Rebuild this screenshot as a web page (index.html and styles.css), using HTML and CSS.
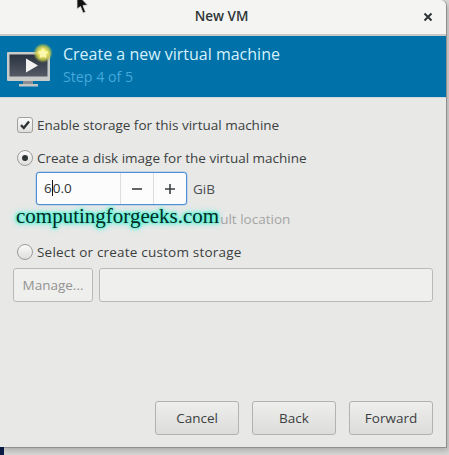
FILE: index.html
```html
<!DOCTYPE html>
<html lang="en">
<head>
<meta charset="utf-8">
<title>New VM</title>
<link rel="stylesheet" href="styles.css">
</head>
<body>
<div class="window">
  <header class="titlebar">
    <span class="title">New VM</span>
    <svg class="close" width="10" height="10" viewBox="0 0 10 10"><path d="M1.5 1.5l7 7M8.5 1.5l-7 7" stroke="#2e3436" stroke-width="2" fill="none"/></svg>
  </header>
  <section class="banner">
    <svg class="vm-icon" width="50" height="44" viewBox="0 0 50 44">
      <defs>
        <radialGradient id="glow"><stop offset="0.35" stop-color="#f6ef6a"/><stop offset="0.7" stop-color="#c9c94a" stop-opacity="0.8"/><stop offset="1" stop-color="#8fb04a" stop-opacity="0"/></radialGradient>
        <linearGradient id="screen" x1="0" y1="0" x2="0" y2="1"><stop offset="0" stop-color="#2b3240"/><stop offset="1" stop-color="#545b66"/></linearGradient>
      </defs>
      <rect x="0" y="9" width="43" height="29" rx="1" fill="#c9cbc9"/>
      <rect x="2.5" y="11.5" width="38" height="22" fill="url(#screen)"/>
      <rect x="16" y="38" width="10" height="3" fill="#8b8f92"/>
      <rect x="12" y="41" width="19" height="2.5" fill="#c4c6c6"/>
      <path d="M19 15.5 L31 22.5 L19 29.5Z" fill="#f2f2f2"/>
      <circle cx="36" cy="10" r="10" fill="url(#glow)"/>
      <path d="M36 4.5l1.7 3.7 4 .4-3 2.7.9 4-3.6-2.1-3.6 2.1.9-4-3-2.7 4-.4z" fill="#fbf7b0"/>
    </svg>
    <div class="banner-text">
      <div class="banner-title">Create a new virtual machine</div>
      <div class="banner-step">Step 4 of 5</div>
    </div>
  </section>
  <main class="content">
    <div class="form">
      <label class="option option-enable">
        <span class="check"><svg width="12" height="12" viewBox="0 0 12 12"><path d="M2 6.2l2.8 2.8L10 2.6" stroke="#2e3436" stroke-width="2.4" fill="none"/></svg></span>
        <span>Enable storage for this virtual machine</span>
      </label>
      <label class="option option-disk">
        <span class="radio radio-on"></span>
        <span>Create a disk image for the virtual machine</span>
      </label>
      <div class="size-row">
        <div class="spin">
          <span class="spin-value">6<i class="caret"></i>0.0</span>
          <span class="spin-btn"><svg width="12" height="12" viewBox="0 0 12 12"><path d="M1 6h10" stroke="#3a3f41" stroke-width="1.6"/></svg></span>
          <span class="spin-btn"><svg width="12" height="12" viewBox="0 0 12 12"><path d="M1 6h10M6 1v10" stroke="#3a3f41" stroke-width="1.6"/></svg></span>
        </div>
        <span class="unit">GiB</span>
      </div>
      <div class="hidden-row">
        <span class="wm">computingforgeeks.com</span><span class="faded">ult location</span>
      </div>
      <label class="option option-custom">
        <span class="radio"></span>
        <span class="custom-label">Select or create custom storage</span>
      </label>
      <div class="manage-row">
        <button class="manage">Manage...</button>
        <div class="path"></div>
      </div>
    </div>
    <footer class="actions">
      <button class="btn">Cancel</button>
      <button class="btn">Back</button>
      <button class="btn">Forward</button>
    </footer>
  </main>
</div>
<svg class="cursor" width="16" height="20" viewBox="0 0 16 20"><path d="M2 -6 L2 9 L5.5 6.5 L8 13 L10.5 12 L8 5.5 L12.5 5 Z" fill="#111" stroke="#ddd" stroke-width="0.8"/></svg>
<div class="corner"></div>
</body>
</html>
```
FILE: styles.css
```css
* { box-sizing: border-box; }
html, body { margin: 0; padding: 0; }
body {
  width: 449px;
  height: 455px;
  overflow: hidden;
  position: relative;
  background: #d9d9d8;
  font-family: "Open Sans", "Noto Sans", sans-serif;
  font-size: 13.5px;
  color: #3b3f40;
}
.window {
  width: 447px;
  height: 448px;
  background: #e8e8e7;
  border-right: 1px solid #8f8f8d;
  border-bottom: 1px solid #8f8f8d;
  border-top-right-radius: 6px;
  box-shadow: 2px 3px 6px rgba(0,0,0,0.2);
  display: flex;
  flex-direction: column;
}
.titlebar {
  height: 36px;
  flex: none;
  background: #f4f4f3;
  border-bottom: 2px solid #c9c9c7;
  border-top-right-radius: 6px;
  display: flex;
  align-items: center;
  justify-content: center;
  position: relative;
  padding: 0 3px 3px 0;
}
.title { font-weight: 600; font-size: 13.5px; color: #2e3436; }
.close { position: absolute; right: 13px; top: 12px; }
.banner {
  height: 61px;
  flex: none;
  background: #0071a9;
  display: flex;
  align-items: flex-start;
  padding: 7px 0 0 7px;
  gap: 6px;
}
.vm-icon { flex: none; }
.banner-text { display: flex; flex-direction: column; gap: 1px; }
.banner-title { font-size: 16px; line-height: 22px; color: #d4f1fb; }
.banner-step { font-size: 14.2px; line-height: 22px; color: #46a9dc; }
.content {
  flex: 1;
  display: flex;
  flex-direction: column;
  justify-content: space-between;
  padding: 0 13px 12px 13px;
  border-top: 1px solid #cfd8dc;
}
.form { display: flex; flex-direction: column; }
.option { display: flex; align-items: center; gap: 4px; padding-left: 4px; height: 20px; }
.option-enable { margin-top: 17px; }
.option-disk { margin-top: 13px; }
.option-custom { margin-top: 14px; }
.custom-label { letter-spacing: 0.2px; }
.check {
  width: 16px; height: 16px;
  border: 1px solid #a0a09e;
  border-radius: 3px;
  background: linear-gradient(#fafafa, #dededc);
  display: flex; align-items: center; justify-content: center;
}
.radio {
  width: 16px; height: 16px;
  border: 1px solid #9c9c9a;
  border-radius: 50%;
  background: linear-gradient(#fafafa, #dededc);
  display: flex; align-items: center; justify-content: center;
}
.radio-on::after { content: ""; width: 6px; height: 6px; border-radius: 50%; background: #2e3436; }
.size-row { display: flex; align-items: center; gap: 6px; margin: 4px 0 0 23px; }
.spin {
  width: 151px; height: 33px;
  display: flex;
  background: #fcfcfc;
  border: 1px solid #4a90d9;
  border-radius: 3px;
  box-shadow: 0 0 0 0.5px rgba(74,144,217,0.4);
}
.spin-value { flex: 1; padding-left: 7px; line-height: 30px; color: #2e3436; position: relative; }
.caret { display: inline-block; width: 0; height: 16px; border-left: 1px solid #111; vertical-align: -3px; }
.spin-btn { width: 33px; display: flex; align-items: center; justify-content: center; border-left: 1px solid #dcdcda; }
.unit { color: #4a4e50; }
.hidden-row { display: flex; align-items: flex-start; height: 22px; margin: 1px 0 0 3px; white-space: nowrap; }
.wm {
  font-family: "Liberation Serif", serif;
  font-size: 21px;
  color: #062a24;
  line-height: 20px;
  text-shadow: 0 0 2px #4df0d0, 0 0 3px #4df0d0, 0 0 4px #4df0d0, 0 0 6px #7df5e0, 0 0 6px #7df5e0;
}
.faded { color: #a4a5a4; margin: 4px 0 0 1px; }
.manage-row { display: flex; gap: 6px; margin-top: 6px; }
.manage {
  width: 80px; height: 34px;
  border: 1px solid #b9b9b7;
  border-radius: 3px;
  background: #efefee;
  color: #929392;
  font: inherit;
  padding: 0;
}
.path { flex: 1; height: 34px; border: 1px solid #b9b9b7; border-radius: 3px; background: #efefee; }
.actions { display: flex; justify-content: flex-end; gap: 13px; }
.btn {
  width: 84px; height: 34px;
  border: 1px solid #b2b2b0;
  border-radius: 3px;
  background: linear-gradient(#eeeeed, #dcdcda);
  color: #3b3f40;
  font: inherit;
  padding: 0;
}
.cursor { position: absolute; left: 75px; top: 0; }
.corner { position: absolute; left: 0; top: 447px; width: 4px; height: 8px; background: #0b1a44; }
```
